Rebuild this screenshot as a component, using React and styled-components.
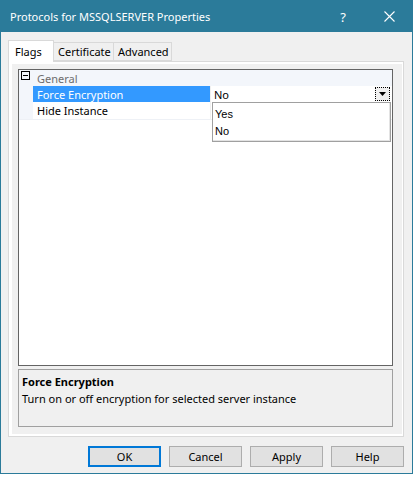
import styled, { createGlobalStyle } from 'styled-components';

const GlobalStyle = createGlobalStyle`
  body {
    margin: 0;
    background: #ffffff;
    font-family: "Noto Sans", "Open Sans", sans-serif;
  }
`;

const Window = styled.div`
  width: 413px;
  height: 474px;
  box-sizing: border-box;
  border: 1px solid #2b7b9a;
  background: #f0f0f0;
  display: flex;
  flex-direction: column;
`;

const TitleBar = styled.div`
  height: 31px;
  flex-shrink: 0;
  background: #2b7b9a;
  color: #ffffff;
  display: flex;
  align-items: center;
  font-size: 11px;
  padding-left: 9px;
`;

const Title = styled.div`
  flex: 1;
`;

const CaptionButton = styled.div`
  width: 46px;
  height: 31px;
  display: flex;
  align-items: center;
  justify-content: center;
  font-size: 13px;
`;

const Body = styled.div`
  flex: 1;
  display: flex;
  flex-direction: column;
  padding: 8px 8px 0 7px;
`;

const TabStrip = styled.div`
  display: flex;
  align-items: flex-end;
  height: 21px;
  position: relative;
  z-index: 1;
`;

const Tab = styled.div`
  box-sizing: border-box;
  height: ${p => (p.$active ? '22px' : '19px')};
  margin-bottom: ${p => (p.$active ? '-1px' : '0')};
  margin-left: ${p => (p.$active ? '0' : '-1px')};
  width: ${p => p.$w}px;
  border: 1px solid #d9d9d9;
  border-bottom: ${p => (p.$active ? 'none' : '1px solid #d9d9d9')};
  background: ${p => (p.$active ? '#ffffff' : '#f0f0f0')};
  font-size: 11px;
  color: #000;
  white-space: nowrap;
  padding-left: ${p => (p.$active ? '6px' : '4px')};
  padding-top: ${p => (p.$active ? '3px' : '1px')};
`;

const TabPanel = styled.div`
  box-sizing: border-box;
  width: 396px;
  height: 376px;
  border: 1px solid #d9d9d9;
  background: #ffffff;
  padding: 2px 1px 2px 3px;
  display: flex;
`;

const Page = styled.div`
  flex: 1;
  background: #f0f0f0;
  padding: 5px 9px 7px 6px;
  display: flex;
  flex-direction: column;
  gap: 3px;
`;

const Grid = styled.div`
  box-sizing: border-box;
  height: 298px;
  border: 1px solid #646464;
  background: #ffffff;
  position: relative;
  font-size: 11px;
`;

const Row = styled.div`
  display: flex;
  height: ${p => (p.$h ? p.$h : 16)}px;
  align-items: stretch;
  border-bottom: ${p => (p.$line ? '1px solid #eef1f6' : 'none')};
`;

const Margin = styled.div`
  width: 14px;
  background: #f3f6fb;
  display: flex;
  align-items: flex-start;
  justify-content: flex-start;
`;

const Toggle = styled.div`
  margin: 1px 0 0 2px;
  width: 9px;
  height: 9px;
  box-sizing: border-box;
  border: 1px solid #000;
  position: relative;
  &::after {
    content: '';
    position: absolute;
    left: 1px;
    right: 1px;
    top: 3px;
    height: 1px;
    background: #000;
  }
`;

const Category = styled.div`
  flex: 1;
  background: #f3f6fb;
  color: #6d6d6d;
  display: flex;
  align-items: center;
  padding-left: 4px;
`;

const Name = styled.div`
  width: 178px;
  display: flex;
  align-items: center;
  padding-left: 4px;
  box-sizing: border-box;
  background: ${p => (p.$selected ? '#3399ff' : '#ffffff')};
  color: ${p => (p.$selected ? '#ffffff' : '#000000')};
  border-right: 1px solid #f0f0f0;
`;

const Value = styled.div`
  flex: 1;
  display: flex;
  align-items: center;
  padding-left: 3px;
  padding-right: 2px;
  color: #000;
`;

const ValueText = styled.div`
  flex: 1;
`;

const DropButton = styled.div`
  width: 15px;
  height: 14px;
  box-sizing: border-box;
  border: 1px dotted #000;
  background: #f0f0f0;
  display: flex;
  align-items: center;
  justify-content: center;
`;

const DropList = styled.div`
  position: absolute;
  left: 193px;
  top: 32px;
  width: 179px;
  height: 40px;
  box-sizing: border-box;
  border: 1px solid #a0a0a0;
  background: #ffffff;
  box-shadow: inset -1px -1px 0 #e3e3e3;
  padding-top: 2px;
  font-family: "Liberation Sans", Arial, sans-serif;
  font-size: 11px;
`;

const ListItem = styled.div`
  height: 17px;
  display: flex;
  align-items: center;
  padding-left: 2px;
  color: #000;
`;

const Description = styled.div`
  box-sizing: border-box;
  height: 58px;
  border: 1px solid #a0a0a0;
  background: #f0f0f0;
  padding: 3px 3px;
  font-size: 11px;
  color: #000;
  line-height: 17px;
`;

const DescTitle = styled.div`
  font-weight: 700;
`;

const ButtonRow = styled.div`
  display: flex;
  justify-content: flex-end;
  gap: 8px;
  margin-top: 9px;
`;

const Button = styled.div`
  box-sizing: border-box;
  width: 73px;
  height: 21px;
  background: #e1e1e1;
  border: ${p => (p.$default ? '2px solid #0078d7' : '1px solid #adadad')};
  display: flex;
  align-items: center;
  justify-content: center;
  font-size: 11px;
  color: #000;
`;

export default function App() {
  return (
    <>
      <GlobalStyle />
      <Window>
        <TitleBar>
          <Title>Protocols for MSSQLSERVER Properties</Title>
          <CaptionButton>?</CaptionButton>
          <CaptionButton>
            <svg width="11" height="11" viewBox="0 0 11 11">
              <path d="M0.5 0.5 L10.5 10.5 M10.5 0.5 L0.5 10.5" stroke="#fff" strokeWidth="1.1" />
            </svg>
          </CaptionButton>
        </TitleBar>
        <Body>
          <TabStrip>
            <Tab $active $w={46}>Flags</Tab>
            <Tab $w={61}>Certificate</Tab>
            <Tab $w={59}>Advanced</Tab>
          </TabStrip>
          <TabPanel>
            <Page>
              <Grid>
                <Row>
                  <Margin>
                    <Toggle />
                  </Margin>
                  <Category>General</Category>
                </Row>
                <Row>
                  <Margin />
                  <Name $selected>Force Encryption</Name>
                  <Value>
                    <ValueText>No</ValueText>
                    <DropButton>
                      <svg width="7" height="4" viewBox="0 0 7 4">
                        <path d="M0 0 H7 L3.5 4 Z" fill="#000" />
                      </svg>
                    </DropButton>
                  </Value>
                </Row>
                <Row $h={17} $line>
                  <Margin />
                  <Name>Hide Instance</Name>
                  <Value />
                </Row>
                <DropList>
                  <ListItem>Yes</ListItem>
                  <ListItem>No</ListItem>
                </DropList>
              </Grid>
              <Description>
                <DescTitle>Force Encryption</DescTitle>
                <div>Turn on or off encryption for selected server instance</div>
              </Description>
            </Page>
          </TabPanel>
          <ButtonRow>
            <Button $default>OK</Button>
            <Button>Cancel</Button>
            <Button>Apply</Button>
            <Button>Help</Button>
          </ButtonRow>
        </Body>
      </Window>
    </>
  );
}
